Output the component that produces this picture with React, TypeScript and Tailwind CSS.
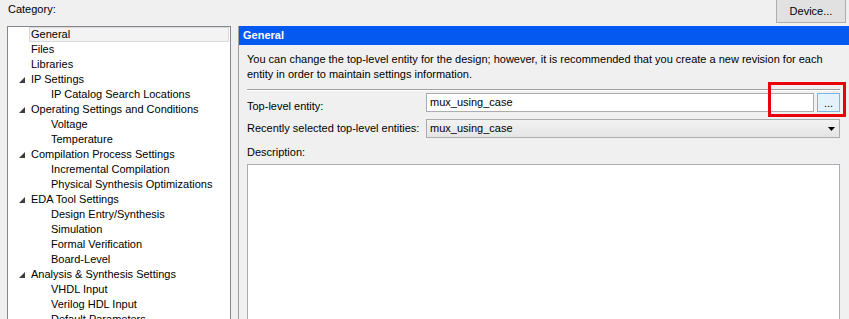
import React from "react"

type Node = { label: string; level: number; expander?: boolean; selected?: boolean }

const tree: Node[] = [
	{ label: "General", level: 0, selected: true },
	{ label: "Files", level: 0 },
	{ label: "Libraries", level: 0 },
	{ label: "IP Settings", level: 0, expander: true },
	{ label: "IP Catalog Search Locations", level: 1 },
	{ label: "Operating Settings and Conditions", level: 0, expander: true },
	{ label: "Voltage", level: 1 },
	{ label: "Temperature", level: 1 },
	{ label: "Compilation Process Settings", level: 0, expander: true },
	{ label: "Incremental Compilation", level: 1 },
	{ label: "Physical Synthesis Optimizations", level: 1 },
	{ label: "EDA Tool Settings", level: 0, expander: true },
	{ label: "Design Entry/Synthesis", level: 1 },
	{ label: "Simulation", level: 1 },
	{ label: "Formal Verification", level: 1 },
	{ label: "Board-Level", level: 1 },
	{ label: "Analysis & Synthesis Settings", level: 0, expander: true },
	{ label: "VHDL Input", level: 1 },
	{ label: "Verilog HDL Input", level: 1 },
	{ label: "Default Parameters", level: 1 },
]

const Expander = () => (
	<svg width="6" height="6" viewBox="0 0 6 6" className="shrink-0">
		<polygon points="6,0 6,6 0,6" fill="#3c3c3c" />
	</svg>
)

const TreeRow = ({ node }: { node: Node }) => (
	<div className="flex h-[15px] items-center whitespace-nowrap">
		<div className="flex w-[21px] shrink-0 justify-end pr-[4px]">
			{node.expander && <Expander />}
		</div>
		<div
			className={
				"flex h-[15px] flex-1 items-center border pr-1 " +
				(node.selected ? "border-[#dadada] bg-[#f3f3f3]" : "border-transparent")
			}
		>
			<span className={node.level === 1 ? "pl-[21px]" : "pl-[1px]"}>{node.label}</span>
		</div>
	</div>
)

export default function App() {
	return (
		<div
			className="relative h-[319px] w-[849px] overflow-hidden bg-[#f0f0f0] text-[11px] leading-[15px] text-black"
			style={{ fontFamily: '"Liberation Sans", Tahoma, sans-serif' }}
		>
			{/* top bar */}
			<div className="flex h-[26px] items-start justify-between pl-[8px] pr-[3px]">
				<span className="mt-[2px]">Category:</span>
				<button className="-mt-[1px] h-[24px] w-[70px] border border-[#adadad] bg-[#e1e1e1] text-center">
					Device...
				</button>
			</div>

			<div className="flex h-[293px] pl-[7px]">
				{/* category tree */}
				<div className="h-full w-[224px] overflow-hidden border border-b-0 border-[#828790] bg-white pr-[1px]">
					{tree.map(n => (
						<TreeRow key={n.label} node={n} />
					))}
				</div>

				{/* settings page */}
				<div className="ml-[7px] flex h-full flex-1 flex-col border-l border-[#a0a0a0]">
					<div className="flex h-[19px] items-center bg-[#0558f0] pl-[4px] font-bold text-white">
						General
					</div>
					<div className="flex flex-1 flex-col pl-[8px] pr-[9px]">
						<p className="mt-[7px] whitespace-nowrap">
							You can change the top-level entity for the design; however, it is recommended that
							you create a new revision for each
							<br />
							entity in order to maintain settings information.
						</p>
						<div className="mt-[7px] h-[2px] border-t border-b border-t-[#a0a0a0] border-b-white" />
						<div className="mt-[2px] flex h-[19px] items-center">
							<span className="mt-[8px] w-[179px] shrink-0">Top-level entity:</span>
							<div className="flex h-[19px] flex-1 items-center border border-[#abadb3] bg-white pl-[3px]">
								mux_using_case
							</div>
							<button className="ml-[3px] flex h-[19px] w-[23px] items-end justify-center border border-[#7eb4ea] bg-[#e5f1fb] pb-[1px] leading-[14px]">
								...
							</button>
						</div>
						<div className="mt-[7px] flex h-[19px] items-center">
							<span className="w-[179px] shrink-0 whitespace-nowrap">
								Recently selected top-level entities:
							</span>
							<div className="flex h-[19px] flex-1 items-center justify-between border border-[#acacac] bg-gradient-to-b from-[#f2f2f2] to-[#e5e5e5] pl-[3px] pr-[4px]">
								<span>mux_using_case</span>
								<svg width="7" height="4" viewBox="0 0 7 4">
									<polygon points="0,0 7,0 3.5,4" fill="#000" />
								</svg>
							</div>
						</div>
						<span className="mt-[7px]">Description:</span>
						<div className="mt-[4px] flex-1 border border-[#abadb3] border-b-0 bg-white" />
					</div>
				</div>
			</div>

			{/* annotation */}
			<div className="absolute left-[768px] top-[82px] h-[35px] w-[78px] border-[3px] border-[#e8000b]" />
		</div>
	)
}
